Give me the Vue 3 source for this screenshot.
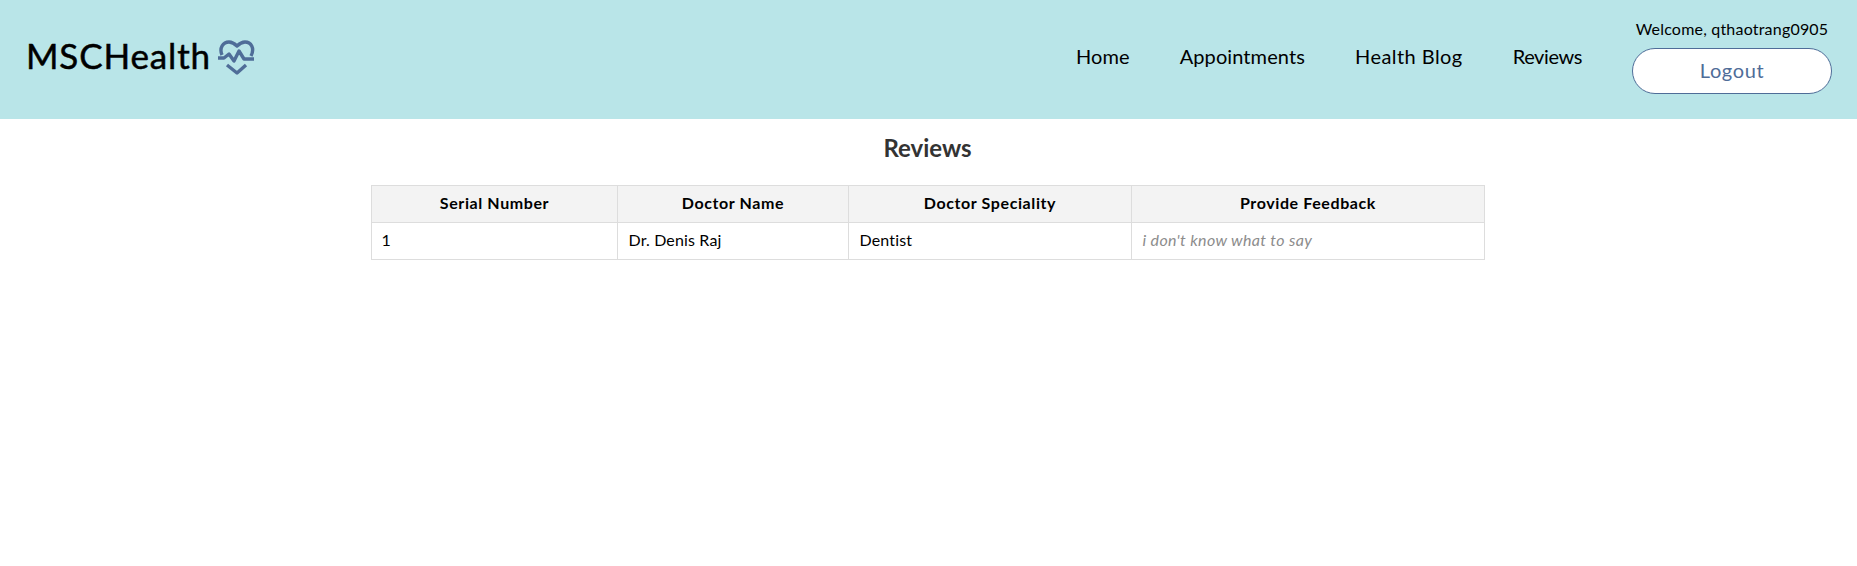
<script setup>
const navLinks = ['Home', 'Appointments', 'Health Blog', 'Reviews']

const reviews = [
  { id: 1, doctor: 'Dr. Denis Raj', speciality: 'Dentist' }
]
</script>

<template>
  <div class="page">
    <header class="header">
      <a class="logo">
        <span class="logo-text">MSCHealth</span>
        <svg class="logo-icon" viewBox="0 0 38 36" fill="none" stroke="#4f6d98" stroke-width="3.4" stroke-linejoin="round">
          <path d="M4 15C1 8 5 2 11 2C15 2 17 4 19 6C21 4 23 2 27 2C33 2 37 8 33 16" />
          <path d="M0 18H6L11 14L16 21L21 11L26 19H36" />
          <path d="M9 25L19 33L28 25" />
        </svg>
      </a>
      <nav class="nav">
        <a v-for="link in navLinks" :key="link" class="nav-link">{{ link }}</a>
        <div class="user">
          <span class="welcome">Welcome, qthaotrang0905</span>
          <button class="logout">Logout</button>
        </div>
      </nav>
    </header>

    <main class="content">
      <h2 class="title">Reviews</h2>
      <table class="table">
        <colgroup>
          <col class="col-serial" />
          <col class="col-name" />
          <col class="col-spec" />
          <col />
        </colgroup>
        <thead>
          <tr>
            <th>Serial Number</th>
            <th>Doctor Name</th>
            <th>Doctor Speciality</th>
            <th>Provide Feedback</th>
          </tr>
        </thead>
        <tbody>
          <tr v-for="review in reviews" :key="review.id">
            <td>{{ review.id }}</td>
            <td>{{ review.doctor }}</td>
            <td>{{ review.speciality }}</td>
            <td class="feedback">i don't know what to say</td>
          </tr>
        </tbody>
      </table>
    </main>
  </div>
</template>

<style>
body {
  background: #fff;
}
</style>

<style scoped>
.page {
  min-height: 566px;
  font-family: Lato, "Liberation Sans", sans-serif;
  color: #000;
}

.header {
  height: 119px;
  box-sizing: border-box;
  background: #b9e5e8;
  display: flex;
  align-items: center;
  justify-content: space-between;
  padding: 0 25px 7px 26px;
}

.logo {
  display: flex;
  align-items: center;
  gap: 7px;
}

.logo-text {
  font-size: 35px;
  line-height: 40px;
  letter-spacing: 0.85px;
  -webkit-text-stroke: 0.5px #000;
  position: relative;
  top: -1px;
}

.logo-icon {
  width: 38px;
  height: 36px;
  margin-top: 3px;
}

.nav {
  display: flex;
  align-items: center;
  gap: 50px;
}

.nav-link {
  font-size: 20px;
  letter-spacing: 0.1px;
}

.nav-link:nth-child(3) {
  letter-spacing: 0.45px;
}

.nav-link:nth-child(4) {
  letter-spacing: -0.4px;
}

.user {
  display: flex;
  flex-direction: column;
  align-items: center;
  gap: 9px;
  width: 200px;
}

.welcome {
  font-size: 16px;
  line-height: 20px;
  letter-spacing: 0.2px;
}

.logout {
  width: 200px;
  height: 46px;
  padding: 0 0 2px;
  background: #fff;
  border: 1px solid #4f6d98;
  border-radius: 23px;
  color: #4f6d98;
  font-family: inherit;
  font-size: 20px;
  letter-spacing: 0.6px;
}

.content {
  display: flex;
  flex-direction: column;
  align-items: center;
  padding-right: 2px;
}

.title {
  margin: 14px 0 22px;
  font-size: 24px;
  line-height: 30px;
  font-weight: 700;
  color: #333;
}

.table {
  width: 1114px;
  border-collapse: collapse;
  table-layout: fixed;
  font-size: 16px;
}

.col-serial {
  width: 246px;
}

.col-name {
  width: 231px;
}

.col-spec {
  width: 283px;
}

.table th,
.table td {
  border: 1px solid #ddd;
  height: 37px;
  padding: 0 10px 4px 11px;
  box-sizing: border-box;
  letter-spacing: 0.15px;
}

.table td:first-child {
  padding-left: 10px;
}

.table th {
  background: #f3f3f3;
  font-weight: 700;
  text-align: center;
  letter-spacing: 0.6px;
}

.table td {
  text-align: left;
}

.table .feedback {
  color: #8c8c8c;
  font-style: italic;
  letter-spacing: 0.35px;
}
</style>
